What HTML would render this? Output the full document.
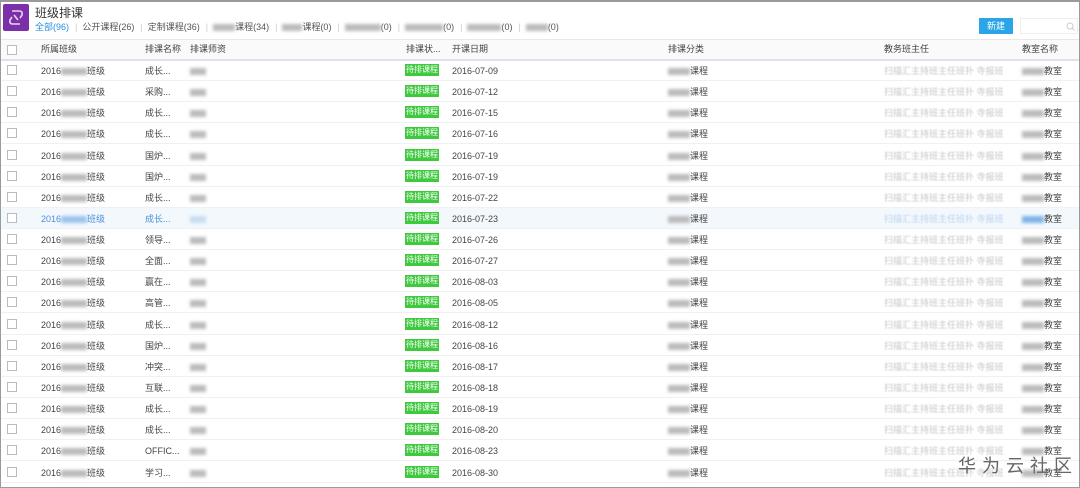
<!DOCTYPE html>
<html><head><meta charset="utf-8"><style>
*{margin:0;padding:0;box-sizing:border-box}
body{width:1080px;height:488px;background:#fff;font-family:"Liberation Sans","Noto Sans CJK SC",sans-serif;font-size:9px;color:#444;position:relative;overflow:hidden}
.frame{position:absolute;left:0;top:0;width:1080px;height:488px;border:1px solid #9a9a9a;border-top-width:2px}
.logo{position:absolute;left:3px;top:4px;width:26px;height:27px;background:#7b2fa8;border-radius:2px}
.title{position:absolute;left:35px;top:4px;font-size:12px;color:#333}
.tabs{position:absolute;left:35px;top:22px;font-size:9px;color:#555;white-space:nowrap;line-height:11px}
.tabs span{margin-right:4px}
.tabs .sep{color:#ccc;margin:0 5px 0 2px}
.bl{display:inline-block;height:7px;background:#bbb;filter:blur(1.5px);vertical-align:-1px}
.btn{position:absolute;left:979px;top:18px;width:34px;height:16px;background:#2aa5e8;color:#fff;font-size:9px;text-align:center;line-height:16px}
.search{position:absolute;left:1020px;top:18px;width:58px;height:16px;border:1px solid #eee}
.hdr{position:absolute;left:0;top:39px;width:1080px;height:22px;background:#fafafa;border-top:1px solid #e8e8e8;border-bottom:2px solid #dde3ea}
.hdr .c{top:4px}
.row{position:absolute;left:0;width:1080px;height:21px;border-bottom:1px solid #eef0f2}
.row.hl{background:#f3f8fd}
.c{position:absolute;top:6px;white-space:nowrap;line-height:11px}
.cb{position:absolute;left:7px;top:5px;width:10px;height:10px;border:1px solid #bbb;background:#fff}
.badge{position:absolute;left:405px;top:4px;width:34px;height:12px;background:#3fc93f;color:#fff;font-size:8px;line-height:12px;text-align:center}
.gr{color:#c6c6c6;filter:blur(.4px)}
.wm{position:absolute;left:958px;top:452px;font-size:18px;color:#666;letter-spacing:6px}
.hl .t{color:#4a90d9}
</style></head><body>
<div class="logo"><svg width="26" height="27" viewBox="0 0 26 27"><path d="M9 7 L16 7 Q20 7 19 11 L17 14 M17 20 L10 20 Q6 20 7 16 L9 13 M11 11 L15 16" stroke="#e8d4f3" stroke-width="1.6" fill="none"/></svg></div>
<div class="title">班级排课</div>
<div class="tabs"><span style="color:#2a8fe0">全部(96)</span><span class="sep">|</span><span>公开课程(26)</span><span class="sep">|</span><span>定制课程(36)</span><span class="sep">|</span><span><i class="bl" style="width:22px"></i>课程(34)</span><span class="sep">|</span><span><i class="bl" style="width:20px"></i>课程(0)</span><span class="sep">|</span><span><i class="bl" style="width:36px"></i>(0)</span><span class="sep">|</span><span><i class="bl" style="width:38px"></i>(0)</span><span class="sep">|</span><span><i class="bl" style="width:34px"></i>(0)</span><span class="sep">|</span><span><i class="bl" style="width:22px"></i>(0)</span></div>
<div class="btn">新建</div>
<div class="search"><svg style="position:absolute;right:2px;top:3px" width="9" height="9" viewBox="0 0 9 9"><circle cx="4" cy="4" r="3" stroke="#ccc" fill="none"/><path d="M6 6 L8.5 8.5" stroke="#ccc"/></svg></div>
<div class="hdr"><div class="cb"></div><div class="c" style="left:41px">所属班级</div><div class="c" style="left:145px">排课名称</div><div class="c" style="left:190px">排课师资</div><div class="c" style="left:406px">排课状...</div><div class="c" style="left:452px">开课日期</div><div class="c" style="left:668px">排课分类</div><div class="c" style="left:884px">教务班主任</div><div class="c" style="left:1022px">教室名称</div></div>

<div class="row" style="top:60px"><div class="cb"></div><div class="c t" style="left:41px">2016<i class="bl" style="width:26px"></i>班级</div><div class="c t" style="left:145px">成长...</div><div class="c" style="left:190px"><i class="bl" style="width:16px"></i></div><div class="badge">待排课程</div><div class="c" style="left:452px">2016-07-09</div><div class="c" style="left:668px"><i class="bl" style="width:22px"></i>课程</div><div class="c gr" style="left:884px">扫描汇主持班主任班扑 寺报班</div><div class="c" style="left:1022px"><i class="bl" style="width:22px"></i>教室</div></div>
<div class="row" style="top:81px"><div class="cb"></div><div class="c t" style="left:41px">2016<i class="bl" style="width:26px"></i>班级</div><div class="c t" style="left:145px">采购...</div><div class="c" style="left:190px"><i class="bl" style="width:16px"></i></div><div class="badge">待排课程</div><div class="c" style="left:452px">2016-07-12</div><div class="c" style="left:668px"><i class="bl" style="width:22px"></i>课程</div><div class="c gr" style="left:884px">扫描汇主持班主任班扑 寺报班</div><div class="c" style="left:1022px"><i class="bl" style="width:22px"></i>教室</div></div>
<div class="row" style="top:102px"><div class="cb"></div><div class="c t" style="left:41px">2016<i class="bl" style="width:26px"></i>班级</div><div class="c t" style="left:145px">成长...</div><div class="c" style="left:190px"><i class="bl" style="width:16px"></i></div><div class="badge">待排课程</div><div class="c" style="left:452px">2016-07-15</div><div class="c" style="left:668px"><i class="bl" style="width:22px"></i>课程</div><div class="c gr" style="left:884px">扫描汇主持班主任班扑 寺报班</div><div class="c" style="left:1022px"><i class="bl" style="width:22px"></i>教室</div></div>
<div class="row" style="top:123px"><div class="cb"></div><div class="c t" style="left:41px">2016<i class="bl" style="width:26px"></i>班级</div><div class="c t" style="left:145px">成长...</div><div class="c" style="left:190px"><i class="bl" style="width:16px"></i></div><div class="badge">待排课程</div><div class="c" style="left:452px">2016-07-16</div><div class="c" style="left:668px"><i class="bl" style="width:22px"></i>课程</div><div class="c gr" style="left:884px">扫描汇主持班主任班扑 寺报班</div><div class="c" style="left:1022px"><i class="bl" style="width:22px"></i>教室</div></div>
<div class="row" style="top:145px"><div class="cb"></div><div class="c t" style="left:41px">2016<i class="bl" style="width:26px"></i>班级</div><div class="c t" style="left:145px">国炉...</div><div class="c" style="left:190px"><i class="bl" style="width:16px"></i></div><div class="badge">待排课程</div><div class="c" style="left:452px">2016-07-19</div><div class="c" style="left:668px"><i class="bl" style="width:22px"></i>课程</div><div class="c gr" style="left:884px">扫描汇主持班主任班扑 寺报班</div><div class="c" style="left:1022px"><i class="bl" style="width:22px"></i>教室</div></div>
<div class="row" style="top:166px"><div class="cb"></div><div class="c t" style="left:41px">2016<i class="bl" style="width:26px"></i>班级</div><div class="c t" style="left:145px">国炉...</div><div class="c" style="left:190px"><i class="bl" style="width:16px"></i></div><div class="badge">待排课程</div><div class="c" style="left:452px">2016-07-19</div><div class="c" style="left:668px"><i class="bl" style="width:22px"></i>课程</div><div class="c gr" style="left:884px">扫描汇主持班主任班扑 寺报班</div><div class="c" style="left:1022px"><i class="bl" style="width:22px"></i>教室</div></div>
<div class="row" style="top:187px"><div class="cb"></div><div class="c t" style="left:41px">2016<i class="bl" style="width:26px"></i>班级</div><div class="c t" style="left:145px">成长...</div><div class="c" style="left:190px"><i class="bl" style="width:16px"></i></div><div class="badge">待排课程</div><div class="c" style="left:452px">2016-07-22</div><div class="c" style="left:668px"><i class="bl" style="width:22px"></i>课程</div><div class="c gr" style="left:884px">扫描汇主持班主任班扑 寺报班</div><div class="c" style="left:1022px"><i class="bl" style="width:22px"></i>教室</div></div>
<div class="row hl" style="top:208px"><div class="cb"></div><div class="c t" style="left:41px">2016<i class="bl" style="width:26px;background:#9cc3ec"></i>班级</div><div class="c t" style="left:145px">成长...</div><div class="c" style="left:190px"><i class="bl" style="width:16px;background:#c8dcf2"></i></div><div class="badge">待排课程</div><div class="c" style="left:452px">2016-07-23</div><div class="c" style="left:668px"><i class="bl" style="width:22px"></i>课程</div><div class="c gr" style="left:884px;color:#b9d3ee">扫描汇主持班主任班扑 寺报班</div><div class="c" style="left:1022px"><i class="bl" style="width:22px;background:#7fb2e8"></i>教室</div></div>
<div class="row" style="top:229px"><div class="cb"></div><div class="c t" style="left:41px">2016<i class="bl" style="width:26px"></i>班级</div><div class="c t" style="left:145px">领导...</div><div class="c" style="left:190px"><i class="bl" style="width:16px"></i></div><div class="badge">待排课程</div><div class="c" style="left:452px">2016-07-26</div><div class="c" style="left:668px"><i class="bl" style="width:22px"></i>课程</div><div class="c gr" style="left:884px">扫描汇主持班主任班扑 寺报班</div><div class="c" style="left:1022px"><i class="bl" style="width:22px"></i>教室</div></div>
<div class="row" style="top:250px"><div class="cb"></div><div class="c t" style="left:41px">2016<i class="bl" style="width:26px"></i>班级</div><div class="c t" style="left:145px">全面...</div><div class="c" style="left:190px"><i class="bl" style="width:16px"></i></div><div class="badge">待排课程</div><div class="c" style="left:452px">2016-07-27</div><div class="c" style="left:668px"><i class="bl" style="width:22px"></i>课程</div><div class="c gr" style="left:884px">扫描汇主持班主任班扑 寺报班</div><div class="c" style="left:1022px"><i class="bl" style="width:22px"></i>教室</div></div>
<div class="row" style="top:271px"><div class="cb"></div><div class="c t" style="left:41px">2016<i class="bl" style="width:26px"></i>班级</div><div class="c t" style="left:145px">赢在...</div><div class="c" style="left:190px"><i class="bl" style="width:16px"></i></div><div class="badge">待排课程</div><div class="c" style="left:452px">2016-08-03</div><div class="c" style="left:668px"><i class="bl" style="width:22px"></i>课程</div><div class="c gr" style="left:884px">扫描汇主持班主任班扑 寺报班</div><div class="c" style="left:1022px"><i class="bl" style="width:22px"></i>教室</div></div>
<div class="row" style="top:292px"><div class="cb"></div><div class="c t" style="left:41px">2016<i class="bl" style="width:26px"></i>班级</div><div class="c t" style="left:145px">高管...</div><div class="c" style="left:190px"><i class="bl" style="width:16px"></i></div><div class="badge">待排课程</div><div class="c" style="left:452px">2016-08-05</div><div class="c" style="left:668px"><i class="bl" style="width:22px"></i>课程</div><div class="c gr" style="left:884px">扫描汇主持班主任班扑 寺报班</div><div class="c" style="left:1022px"><i class="bl" style="width:22px"></i>教室</div></div>
<div class="row" style="top:314px"><div class="cb"></div><div class="c t" style="left:41px">2016<i class="bl" style="width:26px"></i>班级</div><div class="c t" style="left:145px">成长...</div><div class="c" style="left:190px"><i class="bl" style="width:16px"></i></div><div class="badge">待排课程</div><div class="c" style="left:452px">2016-08-12</div><div class="c" style="left:668px"><i class="bl" style="width:22px"></i>课程</div><div class="c gr" style="left:884px">扫描汇主持班主任班扑 寺报班</div><div class="c" style="left:1022px"><i class="bl" style="width:22px"></i>教室</div></div>
<div class="row" style="top:335px"><div class="cb"></div><div class="c t" style="left:41px">2016<i class="bl" style="width:26px"></i>班级</div><div class="c t" style="left:145px">国炉...</div><div class="c" style="left:190px"><i class="bl" style="width:16px"></i></div><div class="badge">待排课程</div><div class="c" style="left:452px">2016-08-16</div><div class="c" style="left:668px"><i class="bl" style="width:22px"></i>课程</div><div class="c gr" style="left:884px">扫描汇主持班主任班扑 寺报班</div><div class="c" style="left:1022px"><i class="bl" style="width:22px"></i>教室</div></div>
<div class="row" style="top:356px"><div class="cb"></div><div class="c t" style="left:41px">2016<i class="bl" style="width:26px"></i>班级</div><div class="c t" style="left:145px">冲突...</div><div class="c" style="left:190px"><i class="bl" style="width:16px"></i></div><div class="badge">待排课程</div><div class="c" style="left:452px">2016-08-17</div><div class="c" style="left:668px"><i class="bl" style="width:22px"></i>课程</div><div class="c gr" style="left:884px">扫描汇主持班主任班扑 寺报班</div><div class="c" style="left:1022px"><i class="bl" style="width:22px"></i>教室</div></div>
<div class="row" style="top:377px"><div class="cb"></div><div class="c t" style="left:41px">2016<i class="bl" style="width:26px"></i>班级</div><div class="c t" style="left:145px">互联...</div><div class="c" style="left:190px"><i class="bl" style="width:16px"></i></div><div class="badge">待排课程</div><div class="c" style="left:452px">2016-08-18</div><div class="c" style="left:668px"><i class="bl" style="width:22px"></i>课程</div><div class="c gr" style="left:884px">扫描汇主持班主任班扑 寺报班</div><div class="c" style="left:1022px"><i class="bl" style="width:22px"></i>教室</div></div>
<div class="row" style="top:398px"><div class="cb"></div><div class="c t" style="left:41px">2016<i class="bl" style="width:26px"></i>班级</div><div class="c t" style="left:145px">成长...</div><div class="c" style="left:190px"><i class="bl" style="width:16px"></i></div><div class="badge">待排课程</div><div class="c" style="left:452px">2016-08-19</div><div class="c" style="left:668px"><i class="bl" style="width:22px"></i>课程</div><div class="c gr" style="left:884px">扫描汇主持班主任班扑 寺报班</div><div class="c" style="left:1022px"><i class="bl" style="width:22px"></i>教室</div></div>
<div class="row" style="top:419px"><div class="cb"></div><div class="c t" style="left:41px">2016<i class="bl" style="width:26px"></i>班级</div><div class="c t" style="left:145px">成长...</div><div class="c" style="left:190px"><i class="bl" style="width:16px"></i></div><div class="badge">待排课程</div><div class="c" style="left:452px">2016-08-20</div><div class="c" style="left:668px"><i class="bl" style="width:22px"></i>课程</div><div class="c gr" style="left:884px">扫描汇主持班主任班扑 寺报班</div><div class="c" style="left:1022px"><i class="bl" style="width:22px"></i>教室</div></div>
<div class="row" style="top:440px"><div class="cb"></div><div class="c t" style="left:41px">2016<i class="bl" style="width:26px"></i>班级</div><div class="c t" style="left:145px">OFFIC...</div><div class="c" style="left:190px"><i class="bl" style="width:16px"></i></div><div class="badge">待排课程</div><div class="c" style="left:452px">2016-08-23</div><div class="c" style="left:668px"><i class="bl" style="width:22px"></i>课程</div><div class="c gr" style="left:884px">扫描汇主持班主任班扑 寺报班</div><div class="c" style="left:1022px"><i class="bl" style="width:22px"></i>教室</div></div>
<div class="row" style="top:462px"><div class="cb"></div><div class="c t" style="left:41px">2016<i class="bl" style="width:26px"></i>班级</div><div class="c t" style="left:145px">学习...</div><div class="c" style="left:190px"><i class="bl" style="width:16px"></i></div><div class="badge">待排课程</div><div class="c" style="left:452px">2016-08-30</div><div class="c" style="left:668px"><i class="bl" style="width:22px"></i>课程</div><div class="c gr" style="left:884px">扫描汇主持班主任班扑 寺报班</div><div class="c" style="left:1022px"><i class="bl" style="width:22px"></i>教室</div></div>
<div class="wm">华为云社区</div>
<div class="frame"></div>
</body></html>
